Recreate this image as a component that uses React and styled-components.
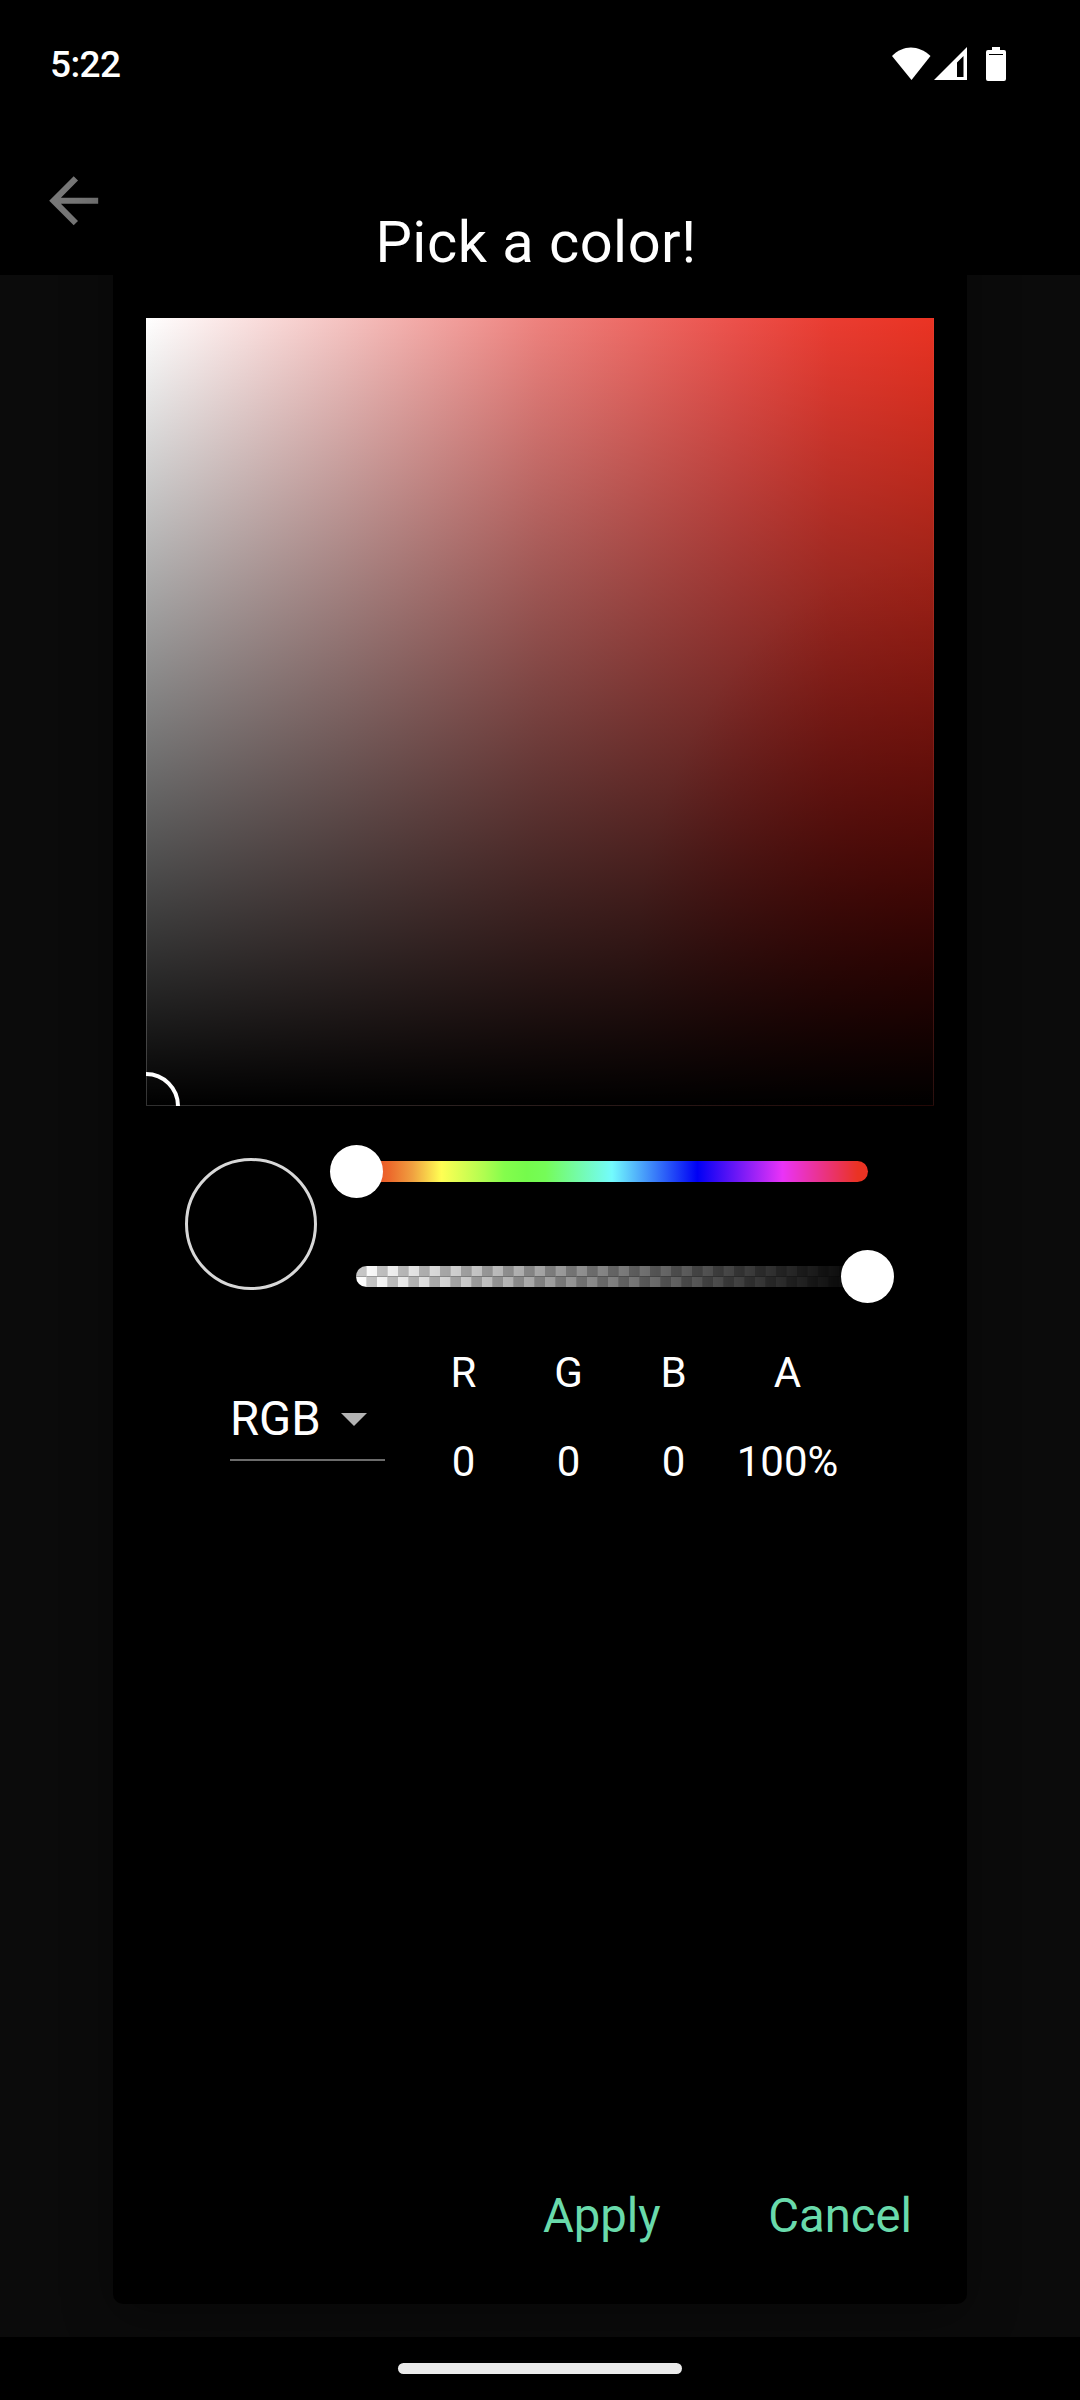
import React from "react";
import styled, { createGlobalStyle } from "styled-components";

const Global = createGlobalStyle`
  * { box-sizing: border-box; }
  body { margin: 0; background: #000; }
`;

const Screen = styled.div`
  width: 1080px;
  height: 2400px;
  display: flex;
  flex-direction: column;
  background: #000;
  color: #fff;
  font-family: Roboto, "Liberation Sans", sans-serif;
  overflow: hidden;
`;

const StatusBar = styled.header`
  height: 128px;
  padding: 0 74px 0 50px;
  display: flex;
  justify-content: space-between;
`;

const Clock = styled.time`
  margin-top: 43px;
  font-size: 37px;
  line-height: 43px;
  font-weight: 500;
  letter-spacing: -0.6px;
`;

const StatusIcons = styled.svg`
  margin-top: 44px;
  width: 116px;
  height: 40px;
`;

const AppBar = styled.div`
  height: 147px;
  padding: 36px 0 0 39.8px;
`;

const BackIcon = styled.svg`
  display: block;
  width: 73.5px;
  height: 73.5px;
`;

const Backdrop = styled.main`
  height: 2062px;
  padding: 0 113.3px 33px;
  background: #0b0b0b;
  display: flex;
`;

const Dialog = styled.section`
  flex: 1;
  margin-top: -147px;
  padding: 55px 32.7px 0;
  border-radius: 10px;
  background: #000;
  box-shadow: 0 12px 50px rgba(0, 0, 0, 0.35);
  display: flex;
  flex-direction: column;
  align-items: center;
`;

const Title = styled.h1`
  margin: 25px 0 41px -8px;
  font-size: 57.75px;
  line-height: 69px;
  font-weight: 400;
  letter-spacing: 0.5px;
`;

const Field = styled.div`
  position: relative;
  flex: none;
  width: 788px;
  height: 788px;
  overflow: hidden;
  background:
    linear-gradient(to right, #303030, #240806) bottom / 100% 1px no-repeat,
    linear-gradient(rgba(255, 255, 255, 0.2), rgba(255, 255, 255, 0.2)) left / 1px 100% no-repeat,
    linear-gradient(rgba(234, 90, 80, 0.18), rgba(234, 90, 80, 0.18)) right / 1px 100% no-repeat,
    linear-gradient(to bottom, transparent, #000),
    radial-gradient(ellipse 38% 55% at 100% 85%, rgba(225, 0, 0, 0.65), rgba(225, 0, 0, 0)),
    linear-gradient(to right, #fff 0%, #f5c2c0 25%, #ee817d 50%, #ec504a 75%, #ea3c31 87%, #ea3323 100%);
`;

const FieldCursor = styled.span`
  position: absolute;
  left: -34px;
  bottom: -34px;
  width: 68px;
  height: 68px;
  border: 4px solid #fff;
  border-radius: 50%;
`;

const Controls = styled.div`
  width: 100%;
  height: 210px;
  display: flex;
  align-items: center;
  gap: 39px;
  padding: 25px 66px 0 39px;
`;

const Preview = styled.div`
  flex: none;
  width: 132px;
  height: 132px;
  border: 3px solid #d8d8d8;
  border-radius: 50%;
  background: #000;
`;

const Sliders = styled.div`
  flex: 1;
  display: flex;
  flex-direction: column;
  gap: 84px;
`;

const Track = styled.div`
  position: relative;
  height: 21px;
  border-radius: 11px;
  background: ${(p) => p.$fill};
`;

const Thumb = styled.span`
  position: absolute;
  top: -16px;
  left: ${(p) => p.$at};
  width: 53px;
  height: 53px;
  margin-left: -26px;
  border-radius: 50%;
  background: #fff;
`;

const Values = styled.div`
  width: 100%;
  height: 168px;
  padding: 32px 0 0 84px;
  display: flex;
`;

const ModeSelect = styled.div`
  width: 155px;
  height: 113px;
  padding-top: 44px;
  border-bottom: 2px solid #6c6c6c;
  display: flex;
  align-items: flex-start;
  font-size: 47.25px;
  line-height: 55px;
`;

const Caret = styled.svg`
  margin: 21px 0 0 20px;
  width: 26px;
  height: 13px;
`;

const Channels = styled.div`
  margin-left: 26px;
  display: flex;
`;

const Channel = styled.div`
  width: ${(p) => p.$width}px;
  display: flex;
  flex-direction: column;
  gap: 40px;
  text-align: center;
  font-size: 42px;
  line-height: 49px;
`;

const Actions = styled.footer`
  width: 100%;
  margin-top: auto;
  padding: 0 22px 60px 0;
  display: flex;
  justify-content: flex-end;
  gap: 107.5px;
`;

const Action = styled.button`
  padding: 0;
  border: 0;
  background: none;
  color: #69daab;
  font: 400 47.25px/56px Roboto, "Liberation Sans", sans-serif;
`;

const NavBar = styled.nav`
  height: 63px;
  padding-top: 26px;
  display: flex;
  justify-content: center;
`;

const NavHandle = styled.span`
  width: 284px;
  height: 11px;
  border-radius: 6px;
  background: #ebebeb;
`;

const hueFill =
  "linear-gradient(to right, #ea3323 0%, #ec6a2c 6.6%, #f0a040 11%, #ffff54 16.67%, #b0fd50 25%, #84fd4c 29%, #75fb4c 33.33%, #75fc58 37%, #73fbfd 50%, #0000f5 66.67%, #ea33f7 83.33%, #ea3323 98%)";
const alphaFill = [
  "linear-gradient(to right, transparent, #000)",
  "linear-gradient(rgba(0, 0, 0, 0.2), rgba(0, 0, 0, 0.2)) 0 10px / 100% 1px no-repeat",
  "repeating-linear-gradient(to right, transparent 0 10px, rgba(0, 0, 0, 0.15) 10px 11px, transparent 11px 21px)",
  "repeating-conic-gradient(#fff 0 25%, #c8c8c8 0 50%) 0 0 / 21px 21px",
].join(", ");

const channels = [
  { name: "R", value: "0", width: 105 },
  { name: "G", value: "0", width: 105 },
  { name: "B", value: "0", width: 105 },
  { name: "A", value: "100%", width: 123 },
];

export default function App() {
  return (
    <Screen>
      <Global />
      <StatusBar>
        <Clock>5:22</Clock>
        <StatusIcons viewBox="0 0 116 40" fill="#fff">
          <path d="M2 12C13 .5 28.500 .5 40.500 12L21.500 36Z" />
          <path fillRule="evenodd" d="M44 36L77 3V36ZM67 18.500V33H73.500V12Z" />
          <path
            fillRule="evenodd"
            d="M102 3h8v3h4q2 0 2 2v27q0 2-2 2H98q-2 0-2-2V8q0-2 2-2h4ZM99 10v1h14v-1Z"
          />
        </StatusIcons>
      </StatusBar>
      <AppBar>
        <BackIcon viewBox="0 0 24 24" fill="#777">
          <path d="M19 11H6.830l5.590-5.590L11 4l-8 8 8 8 1.410-1.410L6.830 13H19Z" />
        </BackIcon>
      </AppBar>
      <Backdrop>
        <Dialog>
          <Title>Pick a color!</Title>
          <Field>
            <FieldCursor />
          </Field>
          <Controls>
            <Preview />
            <Sliders>
              <Track $fill={hueFill}>
                <Thumb $at="0%" />
              </Track>
              <Track $fill={alphaFill}>
                <Thumb $at="calc(100% - 1px)" />
              </Track>
            </Sliders>
          </Controls>
          <Values>
            <ModeSelect>
              RGB
              <Caret viewBox="0 0 26 13" fill="#b3b3b3">
                <path d="M0 0H26L13 13Z" />
              </Caret>
            </ModeSelect>
            <Channels>
              {channels.map((c) => (
                <Channel key={c.name} $width={c.width}>
                  <span>{c.name}</span>
                  <span>{c.value}</span>
                </Channel>
              ))}
            </Channels>
          </Values>
          <Actions>
            <Action>Apply</Action>
            <Action>Cancel</Action>
          </Actions>
        </Dialog>
      </Backdrop>
      <NavBar>
        <NavHandle />
      </NavBar>
    </Screen>
  );
}
